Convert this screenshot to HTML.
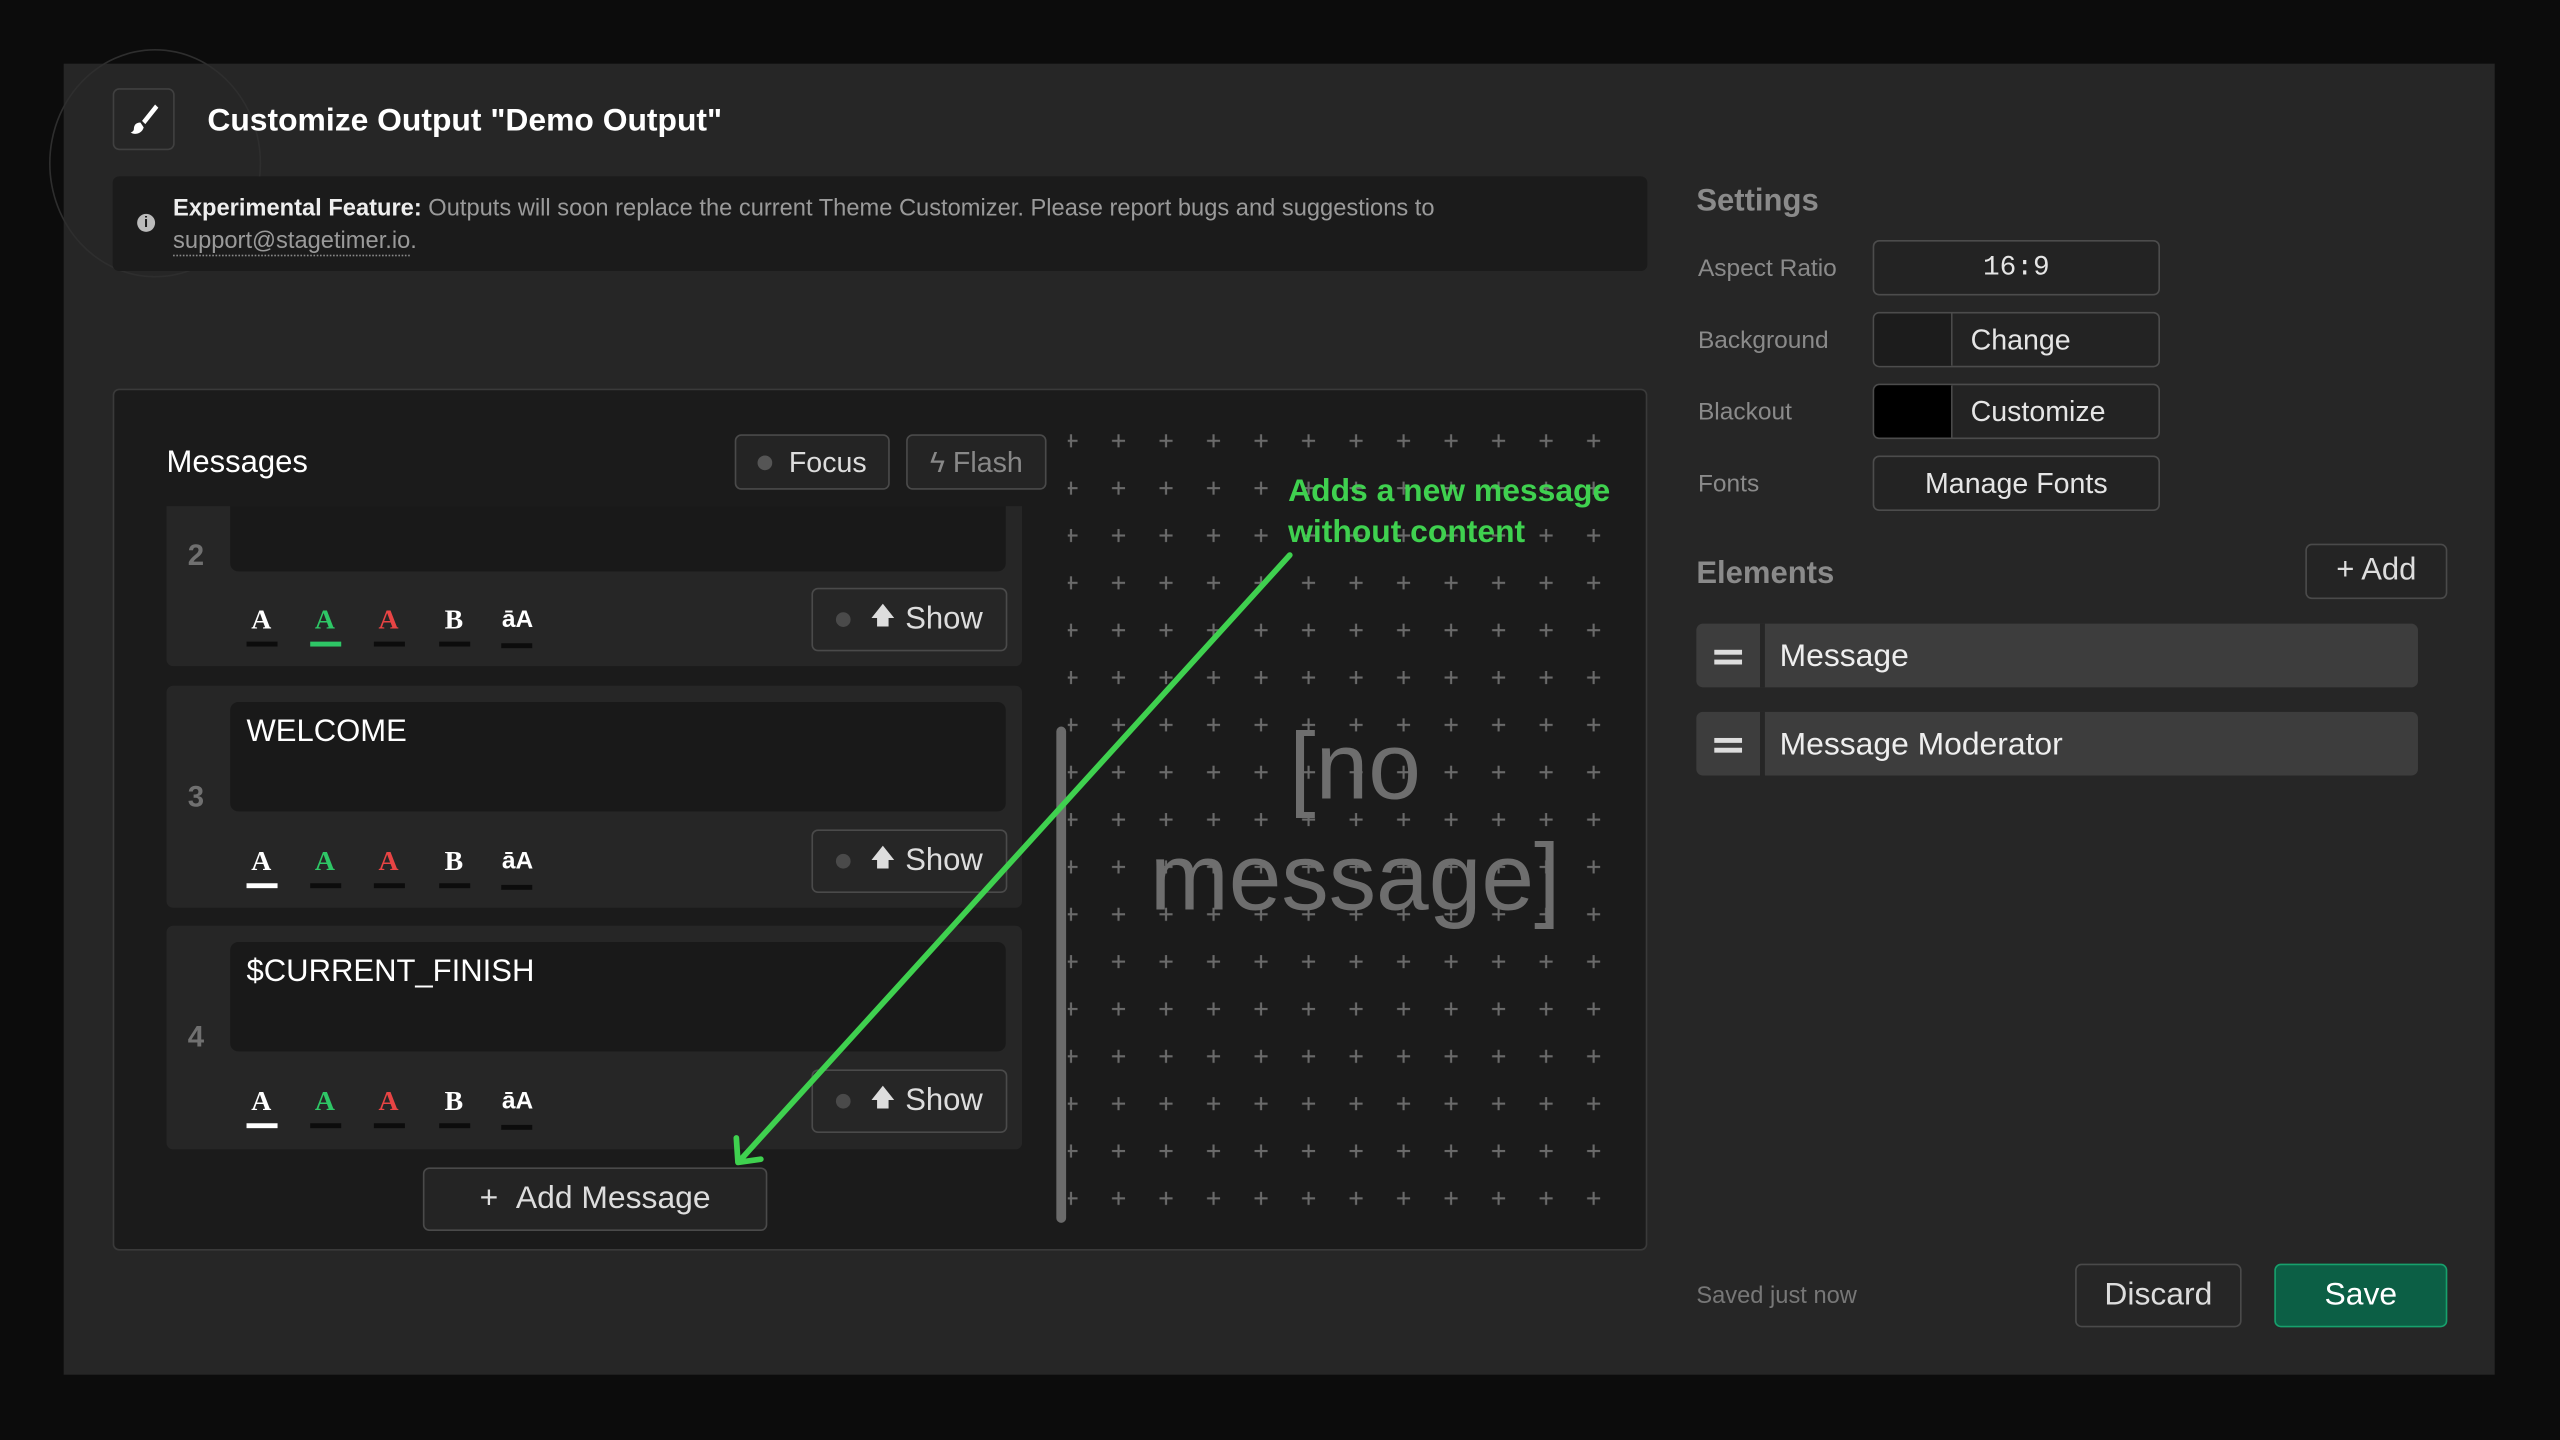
<!DOCTYPE html>
<html><head><meta charset="utf-8"><style>
*{box-sizing:border-box;margin:0;padding:0}
html,body{width:2560px;height:1440px;overflow:hidden;background:#0c0c0c;font-family:"Liberation Sans",sans-serif}
#s{position:absolute;left:0;top:0;width:1568px;height:882px;transform:scale(1.632653);transform-origin:0 0}
.a{position:absolute}
.t{position:absolute;white-space:nowrap}
.btn{position:absolute;border:1px solid #4a4a4a;border-radius:4px;background:#242424;color:#ddd;display:flex;align-items:center;justify-content:center}
.card{position:absolute;left:102px;width:524px;background:#262626;border-radius:4px}
.ta{position:absolute;left:141px;width:475px;background:#191919;border-radius:5px}
.num{position:absolute;left:115px;color:#707070;font-weight:bold;font-size:18px}
.fm{position:absolute;font-family:"Liberation Serif",serif;font-weight:bold;font-size:17px;text-align:center;width:18px}
.ul{position:absolute;width:19px;height:3px;background:#0c0c0c}
.lbl{position:absolute;left:1040px;color:#8a8a8a;font-size:15px}
.inp{position:absolute;left:1147px;width:176px;height:34px;border:1px solid #4c4c4c;border-radius:4px;background:#232323;color:#e5e5e5;font-size:17.5px}
.ar{font-size:15px;margin-right:6px}
</style></head><body><div id="s">
<div class="a" style="left:39px;top:39px;width:1489px;height:803px;background:#262626"></div>
<div class="a" style="left:30px;top:30px;width:130px;height:140px;border:1px solid #2e2e2e;border-radius:50%"></div>
<div class="a" style="left:69px;top:54px;width:38px;height:38px;border:1px solid #404040;border-radius:4px;background:#262626"></div>
<svg class="a" style="left:76px;top:61px" width="24" height="24" viewBox="0 0 24 24"><path d="M19 3 L11 13 L13 15 L21 5 Z" fill="#fff"/><path d="M10 14 C7 14 6 16 6 18 C6 19 5 20 4 20 C6 22 11 21 12 17 Z" fill="#fff"/></svg>
<div class="t" style="left:127px;top:63px;color:#fff;font-size:19.5px;font-weight:bold">Customize Output "Demo Output"</div>
<div class="a" style="left:69px;top:108px;width:940px;height:58px;background:#1b1b1b;border-radius:4px"></div>
<div class="a" style="left:84px;top:131px;width:11px;height:11px;border-radius:50%;background:#bbb;color:#1b1b1b;font-size:9px;font-weight:bold;text-align:center;line-height:11px">i</div>
<div class="t" style="left:106px;top:120px;font-size:14.5px;color:#9a9a9a"><b style="color:#eee">Experimental Feature:</b> Outputs will soon replace the current Theme Customizer. Please report bugs and suggestions to</div>
<div class="t" style="left:106px;top:140px;font-size:14.5px;color:#9a9a9a"><span style="border-bottom:1px dotted #888">support@stagetimer.io</span>.</div>

<div class="a" style="left:69px;top:238px;width:940px;height:528px;background:#1b1b1b;border:1px solid #3a3a3a;border-radius:4px"></div>
<svg class="a" style="left:650px;top:255px" width="340" height="495"><defs><pattern id="p" x="-8.5" y="0" width="29.1" height="29" patternUnits="userSpaceOnUse"><path d="M14.5 11v8M10.5 15h8" stroke="#6a6a6a" stroke-width="1.3"/></pattern></defs><rect x="4" width="336" height="495" fill="url(#p)"/></svg>
<div class="t" style="left:690px;top:436px;width:280px;text-align:center;color:#6e6e6e;font-size:58px;line-height:68px;white-space:normal">[no message]</div>
<div class="a" style="left:647px;top:445px;width:6px;height:304px;background:#6b6b6b;border-radius:3px"></div>

<div class="t" style="left:102px;top:273px;color:#fff;font-size:19px">Messages</div>
<div class="btn" style="left:450px;top:266px;width:95px;height:34px;font-size:17.5px"><span style="width:9px;height:9px;border-radius:50%;background:#555;margin-right:10px"></span>Focus</div>
<div class="btn" style="left:555px;top:266px;width:86px;height:34px;font-size:17.5px;color:#888">ϟ&nbsp;Flash</div>

<div class="card" style="top:310px;height:98px;border-radius:0 0 4px 4px"></div>
<div class="ta" style="top:310px;height:40px;border-radius:0 0 5px 5px"></div>
<div class="num" style="top:330px">2</div>
<div class="card" style="top:420px;height:136px"></div>
<div class="ta" style="top:430px;height:67px"></div>
<div class="t" style="left:151px;top:438px;color:#fff;font-size:19px">WELCOME</div>
<div class="num" style="top:478px">3</div>
<div class="card" style="top:567px;height:137px"></div>
<div class="ta" style="top:577px;height:67px"></div>
<div class="t" style="left:151px;top:585px;color:#fff;font-size:19px">$CURRENT_FINISH</div>
<div class="num" style="top:625px">4</div>

<div class="fm" style="left:151px;top:370px;color:#fff">A</div><div class="ul" style="left:151px;top:393px"></div>
<div class="fm" style="left:190px;top:370px;color:#2ec766">A</div><div class="ul" style="left:190px;top:393px;background:#2ec766"></div>
<div class="fm" style="left:229px;top:370px;color:#e84444">A</div><div class="ul" style="left:229px;top:393px"></div>
<div class="fm" style="left:269px;top:370px;color:#fff">B</div><div class="ul" style="left:269px;top:393px"></div>
<div class="fm" style="left:306px;top:371px;color:#fff;font-family:'Liberation Sans';font-size:15px;width:22px">āA</div><div class="ul" style="left:307px;top:394px"></div>

<div class="fm" style="left:151px;top:518px;color:#fff">A</div><div class="ul" style="left:151px;top:541px;background:#fff"></div>
<div class="fm" style="left:190px;top:518px;color:#2ec766">A</div><div class="ul" style="left:190px;top:541px"></div>
<div class="fm" style="left:229px;top:518px;color:#e84444">A</div><div class="ul" style="left:229px;top:541px"></div>
<div class="fm" style="left:269px;top:518px;color:#fff">B</div><div class="ul" style="left:269px;top:541px"></div>
<div class="fm" style="left:306px;top:519px;color:#fff;font-family:'Liberation Sans';font-size:15px;width:22px">āA</div><div class="ul" style="left:307px;top:542px"></div>

<div class="fm" style="left:151px;top:665px;color:#fff">A</div><div class="ul" style="left:151px;top:688px;background:#fff"></div>
<div class="fm" style="left:190px;top:665px;color:#2ec766">A</div><div class="ul" style="left:190px;top:688px"></div>
<div class="fm" style="left:229px;top:665px;color:#e84444">A</div><div class="ul" style="left:229px;top:688px"></div>
<div class="fm" style="left:269px;top:665px;color:#fff">B</div><div class="ul" style="left:269px;top:688px"></div>
<div class="fm" style="left:306px;top:666px;color:#fff;font-family:'Liberation Sans';font-size:15px;width:22px">āA</div><div class="ul" style="left:307px;top:689px"></div>

<div class="btn" style="left:497px;top:360px;width:120px;height:39px;font-size:19px;background:#262626"><span style="width:9px;height:9px;border-radius:50%;background:#4a4a4a;margin-right:12px"></span><span class="ar">🡅</span>Show</div>
<div class="btn" style="left:497px;top:508px;width:120px;height:39px;font-size:19px;background:#262626"><span style="width:9px;height:9px;border-radius:50%;background:#4a4a4a;margin-right:12px"></span><span class="ar">🡅</span>Show</div>
<div class="btn" style="left:497px;top:655px;width:120px;height:39px;font-size:19px;background:#262626"><span style="width:9px;height:9px;border-radius:50%;background:#4a4a4a;margin-right:12px"></span><span class="ar">🡅</span>Show</div>
<div class="btn" style="left:259px;top:715px;width:211px;height:39px;font-size:19.5px">+&nbsp;&nbsp;Add Message</div>

<div class="t" style="left:789px;top:289px;color:#3fd14f;font-weight:bold;font-size:19.5px;line-height:25px">Adds a new message<br>without content</div>
<svg class="a" style="left:0;top:0" width="1568" height="882"><path d="M790 340 L453 711" stroke="#3fd14f" stroke-width="3.5" fill="none" stroke-linecap="round"/><path d="M451 697 L452 712 L466 710" stroke="#3fd14f" stroke-width="3.5" fill="none" stroke-linecap="round" stroke-linejoin="round"/></svg>

<div class="t" style="left:1039px;top:113px;color:#8a8a8a;font-weight:bold;font-size:19px">Settings</div>
<div class="lbl" style="top:156px">Aspect Ratio</div>
<div class="lbl" style="top:200px">Background</div>
<div class="lbl" style="top:244px">Blackout</div>
<div class="lbl" style="top:288px">Fonts</div>
<div class="inp" style="top:147px;text-align:center;line-height:33px;font-family:'Liberation Mono',monospace;font-size:17px">16:9</div>
<div class="inp" style="top:191px"><div class="a" style="left:0;top:0;width:48px;height:32px;background:#1c1c1c;border-right:1px solid #4c4c4c;border-radius:3px 0 0 3px"></div><div class="t" style="left:59px;top:6px">Change</div></div>
<div class="inp" style="top:235px"><div class="a" style="left:0;top:0;width:48px;height:32px;background:#000;border-right:1px solid #4c4c4c;border-radius:3px 0 0 3px"></div><div class="t" style="left:59px;top:6px">Customize</div></div>
<div class="inp" style="top:279px;text-align:center;line-height:32px">Manage Fonts</div>

<div class="t" style="left:1039px;top:341px;color:#8a8a8a;font-weight:bold;font-size:19px">Elements</div>
<div class="btn" style="left:1412px;top:333px;width:87px;height:34px;font-size:19px">+ Add</div>
<div class="a" style="left:1039px;top:382px;width:442px;height:39px;background:#3d3d3d;border-radius:4px"></div>
<div class="a" style="left:1078px;top:382px;width:3px;height:39px;background:#262626"></div>
<div class="a" style="left:1050px;top:398px;width:17px;height:2.5px;background:#ddd"></div><div class="a" style="left:1050px;top:404px;width:17px;height:2.5px;background:#ddd"></div>
<div class="t" style="left:1090px;top:391px;color:#eee;font-size:19.5px">Message</div>
<div class="a" style="left:1039px;top:436px;width:442px;height:39px;background:#3d3d3d;border-radius:4px"></div>
<div class="a" style="left:1078px;top:436px;width:3px;height:39px;background:#262626"></div>
<div class="a" style="left:1050px;top:452px;width:17px;height:2.5px;background:#ddd"></div><div class="a" style="left:1050px;top:458px;width:17px;height:2.5px;background:#ddd"></div>
<div class="t" style="left:1090px;top:445px;color:#eee;font-size:19.5px">Message Moderator</div>

<div class="t" style="left:1039px;top:786px;color:#777;font-size:14.5px">Saved just now</div>
<div class="btn" style="left:1271px;top:774px;width:102px;height:39px;font-size:19.5px;background:#262626">Discard</div>
<div class="btn" style="left:1393px;top:774px;width:106px;height:39px;font-size:19.5px;background:#0c5f45;border-color:#17a06c;color:#fff">Save</div>
</div></body></html>
